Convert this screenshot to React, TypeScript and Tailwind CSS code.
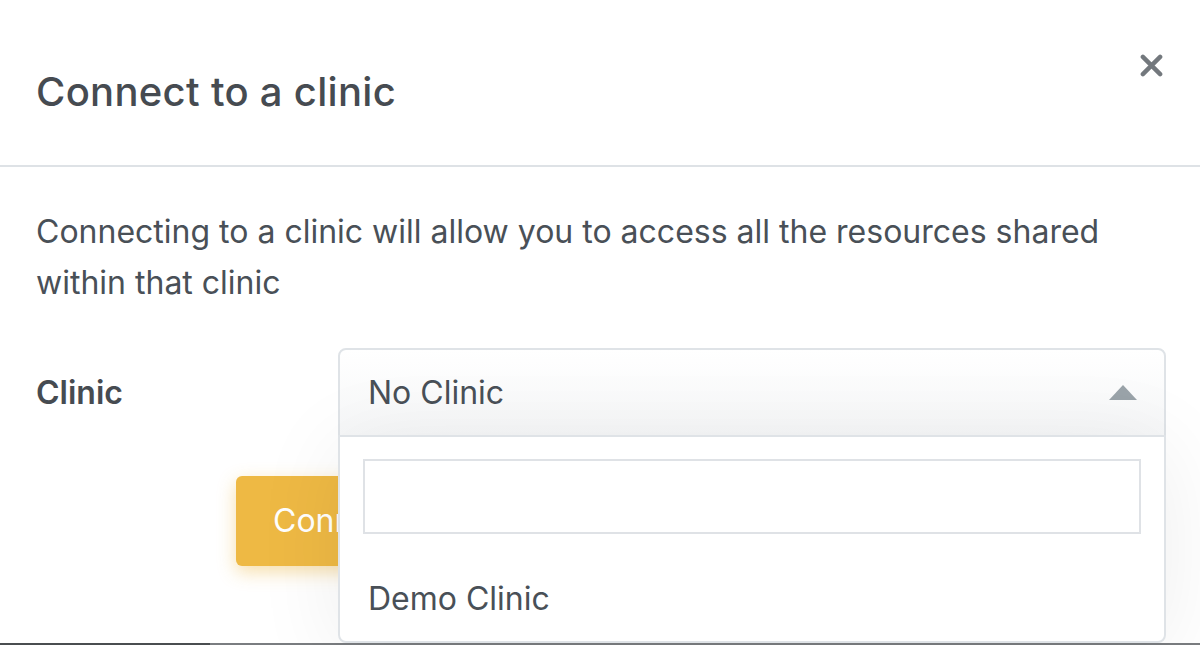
import React from "react";

export default function App() {
  return (
    <div
      className="relative flex h-[645px] w-[1200px] flex-col overflow-hidden bg-white text-[#495057]"
      style={{ fontFamily: "Inter, 'Noto Sans', sans-serif" }}
    >
      {/* Header */}
      <div className="flex h-[167px] shrink-0 items-start justify-between border-b-2 border-[#dee2e6] pl-[36px] pr-[37px]">
        <h5 className="mt-[68px] text-[40px] font-medium leading-[48px] tracking-[0.3px] text-[#464b51]">Connect to a clinic</h5>
        <button className="mt-[54px] flex h-[23px] w-[23px] items-center justify-center text-[#73787d]" aria-label="Close">
          <svg viewBox="0 0 24 24" width="23" height="23" fill="none" stroke="currentColor" strokeWidth="4.6" strokeLinecap="round">
            <path d="M3 3 L21 21 M21 3 L3 21" />
          </svg>
        </button>
      </div>

      {/* Body */}
      <div className="flex flex-1 flex-col pl-[36px] pr-[34px] pt-[39px]">
        <p className="text-[32px] leading-[51px]">
          Connecting to a clinic will allow you to access all the resources shared within that clinic
        </p>

        <div className="mt-[40px] flex items-start">
          <label className="flex h-[89px] w-[302px] shrink-0 items-center text-[32px] font-semibold text-[#464b51]">
            Clinic
          </label>
          <div className="relative w-[828px]">
            <div className="flex h-[89px] items-center justify-between rounded-t-[8px] border-2 border-[#dfe3e7] bg-gradient-to-b from-white to-[#f6f7f8] pl-[28px] pr-[27px]">
              <span className="text-[32px] leading-none">No Clinic</span>
              <svg width="28" height="15" viewBox="0 0 28 15">
                <path d="M0 15 L14 0 L28 15 Z" fill="#9aa3a9" />
              </svg>
            </div>
            <div className="absolute left-0 right-0 top-[87px] z-10 flex h-[208px] flex-col rounded-b-[8px] border-2 border-[#dfe3e7] bg-white px-[23px] pt-[22px] shadow-[0_10px_90px_rgba(0,0,0,0.07)]">
              <div className="h-[75px] shrink-0 border-2 border-[#dfe2e6] bg-white" />
              <div className="mt-[47px] pl-[5px] text-[32px] leading-[36px]">Demo Clinic</div>
            </div>
          </div>
        </div>

        <div className="mt-[39px] pl-[200px]">
          <button className="flex h-[90px] items-center rounded-[6px] bg-[#eeb944] px-[37px] text-[32px] text-white shadow-[0_6px_18px_rgba(238,185,68,0.45)]">
            Connect
          </button>
        </div>
      </div>

      {/* Bottom edge */}
      <div className="absolute bottom-0 left-0 flex h-[2px] w-full">
        <div className="h-full w-[210px] bg-[#4a4d50]" />
        <div className="h-full flex-1 bg-[#7a7d80]" />
      </div>
    </div>
  );
}
